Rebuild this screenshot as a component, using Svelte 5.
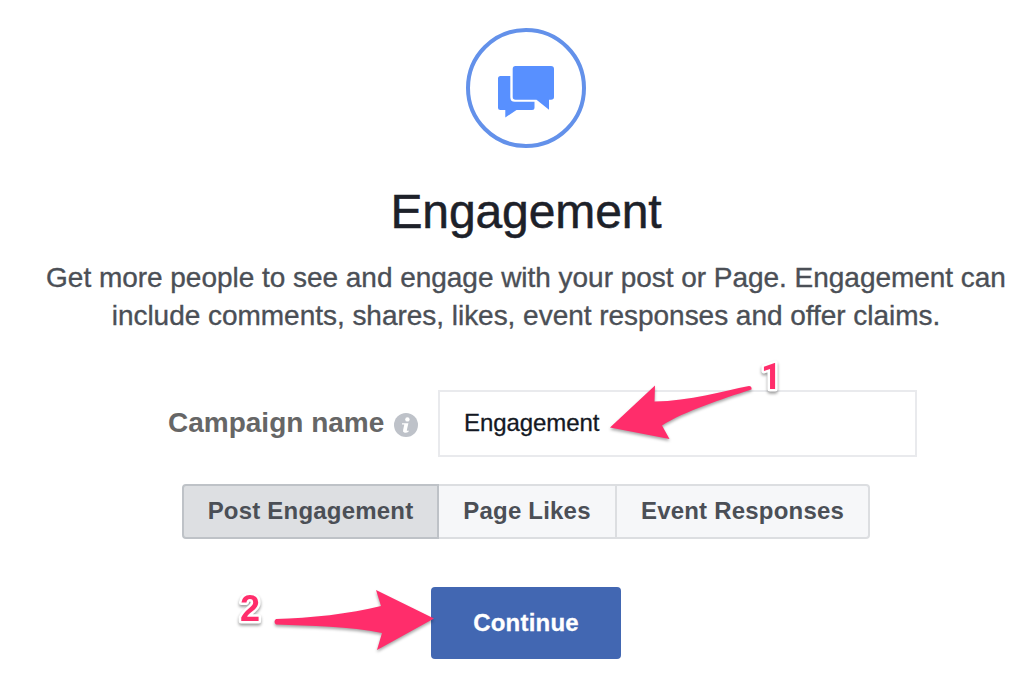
<script>
  let name = $state('Engagement');
  let active = $state(0);
  const kinds = ['Post Engagement', 'Page Likes', 'Event Responses'];
</script>

<main>
  <div class="badge">
    <svg width="120" height="120" viewBox="0 0 120 120" aria-hidden="true">
      <circle cx="60" cy="60" r="58" fill="none" stroke="#6391ea" stroke-width="4" />
      <path fill="#5890ff" d="M34.5 48H44.3V69.3Q44.3 73.8 48.8 73.8H68.5V79.5Q68.5 82 66 82H50.5L39.3 89.5V82H34.5Q32 82 32 79.5V50.5Q32 48 34.5 48Z" />
      <path fill="#5890ff" d="M49.5 38H85Q88 38 88 41V69Q88 71.8 85 71.8H83V81.8L70.5 71.8H49.5Q46.7 71.8 46.7 69V41Q46.7 38 49.5 38Z" />
    </svg>
  </div>

  <h1>Engagement</h1>
  <p>Get more people to see and engage with your post or Page. Engagement can<br />include comments, shares, likes, event responses and offer claims.</p>

  <div class="field">
    <label for="campaign">Campaign name</label>
    <svg class="info" width="24" height="24" viewBox="0 0 24 24" aria-hidden="true">
      <circle cx="12" cy="12" r="12" fill="#bec2c9" />
      <circle cx="13.4" cy="6.4" r="2.2" fill="#fff" />
      <path d="M8 10.2H14.4L12.8 17.2Q12.7 18 14.6 17.6V18.7Q12.2 20.2 10.2 19.5Q8.6 19 9.1 17L10.3 11.6H8Z" fill="#fff" />
    </svg>
    <input id="campaign" bind:value={name} />
  </div>

  <div class="kinds">
    {#each kinds as kind, i}
      <button class:active={active === i} onclick={() => (active = i)}>{kind}</button>
    {/each}
  </div>

  <button class="continue">Continue</button>

  <svg class="notes" width="1024" height="677" viewBox="0 0 1024 677" aria-hidden="true">
    <g class="arrow">
      <path d="M610 427.5L655 385.5L654.5 401.5C690 401 723 391 749 386Q752 386 751.5 389.5C722 399 685 411 662 425.5L669.5 439Z" />
      <path d="M434 618.5L376 590L381 606C350 614 310 618 276 619Q273 621.5 276 624.5C310 626 350 626 382 633L377 650Z" />
    </g>
    <g class="number">
      <text class="one" x="761" y="388.5">1</text>
      <text x="240" y="621">2</text>
    </g>
  </svg>
</main>

<style>
  :global(body) {
    margin: 0;
    background: #fff;
  }
  main {
    position: relative;
    box-sizing: border-box;
    width: 1024px;
    height: 677px;
    padding: 28px 0 0 28px;
    overflow: hidden;
    display: flex;
    flex-direction: column;
    align-items: center;
    font-family: 'Liberation Sans', Arial, sans-serif;
    color: #4b4f56;
  }
  .badge {
    height: 120px;
  }
  h1 {
    margin: 36px 0 0;
    font-size: 48px;
    line-height: 56px;
    font-weight: 400;
    letter-spacing: -0.1px;
    color: #1d2129;
    -webkit-text-stroke: 0.5px #1d2129;
  }
  p {
    margin: 19px 0 0;
    font-size: 28px;
    line-height: 38px;
    letter-spacing: -0.03px;
    text-align: center;
    white-space: nowrap;
    -webkit-text-stroke: 0.35px #4b4f56;
  }
  .field {
    display: flex;
    align-items: center;
    align-self: flex-start;
    margin: 55px 0 0 140px;
  }
  label {
    width: 226px;
    padding-bottom: 2px;
    font-size: 28px;
    font-weight: 700;
    color: #666;
    white-space: nowrap;
  }
  .info {
    margin: 2px 20px 0 0;
  }
  input {
    box-sizing: border-box;
    width: 479px;
    height: 67px;
    padding: 0 24px 2px;
    border: 2px solid #e9eaed;
    border-radius: 0;
    outline: none;
    background: #fff;
    color: #141823;
    font: 24px 'Liberation Sans', Arial, sans-serif;
    letter-spacing: -0.08px;
    -webkit-text-stroke: 0.3px #141823;
  }
  .kinds {
    display: flex;
    margin-top: 27px;
  }
  .kinds button {
    box-sizing: border-box;
    width: 256px;
    height: 55px;
    padding: 0 0 2px;
    border: 2px solid #dcdee1;
    border-left-width: 0;
    background: #f6f7f9;
    color: #4b4f56;
    font: 700 24px 'Liberation Sans', Arial, sans-serif;
    letter-spacing: 0.2px;
  }
  .kinds button:first-child {
    width: 257px;
    border-left-width: 2px;
    border-radius: 4px 0 0 4px;
  }
  .kinds button:nth-child(2) {
    width: 178px;
  }
  .kinds button:last-child {
    width: 253px;
    border-radius: 0 4px 4px 0;
  }
  .kinds button.active {
    background: #dddfe2;
    border-color: #bec2c7;
  }
  .continue {
    width: 190px;
    height: 72px;
    margin-top: 48px;
    padding: 0;
    border: 0;
    border-radius: 4px;
    background: #4267b2;
    color: #fff;
    font: 700 24px 'Liberation Sans', Arial, sans-serif;
    letter-spacing: 0.2px;
    -webkit-text-stroke: 0.3px #fff;
  }
  .notes {
    position: absolute;
    left: 0;
    top: 0;
    pointer-events: none;
  }
  .arrow {
    fill: #ff2d6b;
    filter: drop-shadow(0 2px 1.5px rgba(0, 0, 0, 0.35));
  }
  .number {
    font: 700 36px 'Liberation Sans', Arial, sans-serif;
    fill: #ff2d6b;
    stroke: #fff;
    stroke-width: 5px;
    stroke-linejoin: round;
    paint-order: stroke;
    filter: drop-shadow(0 2px 1.5px rgba(0, 0, 0, 0.4));
  }
  .one {
    font-family: Roboto, sans-serif;
  }
</style>
